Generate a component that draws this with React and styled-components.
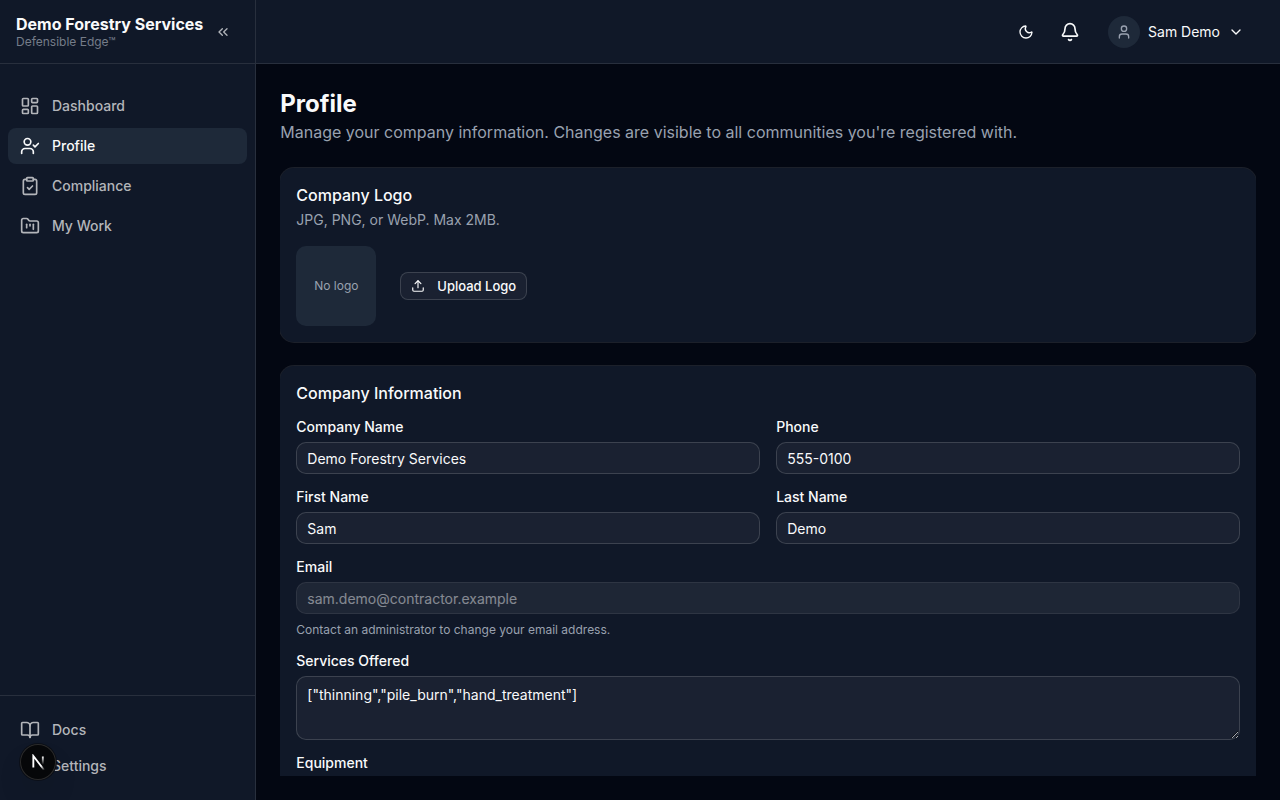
import React from "react";
import styled, { createGlobalStyle, css } from "styled-components";
import {
  LayoutDashboard,
  UserCheck,
  ClipboardCheck,
  FolderKanban,
  BookOpen,
  Settings,
  ChevronsLeft,
  ChevronDown,
  Moon,
  Bell,
  User,
  Upload,
} from "lucide-react";

const GlobalStyle = createGlobalStyle`
  *, *::before, *::after { box-sizing: border-box; }
  body {
    margin: 0;
    background: #030712;
    color: #f9fafb;
    font-family: Inter, "Liberation Sans", sans-serif;
    font-size: 14px;
    line-height: 20px;
    -webkit-font-smoothing: antialiased;
  }
  button, input, textarea { font: inherit; color: inherit; }
`;

const line = "rgb(255 255 255 / 10%)";
const muted = "#99a1af";
const surface = "#101828";
const raised = "#1e2939";

const Shell = styled.div`
  display: flex;
  height: 100vh;
  overflow: hidden;
`;

const Sidebar = styled.aside`
  display: flex;
  flex-direction: column;
  flex: 0 0 256px;
  background: ${surface};
  border-right: 1px solid ${line};
`;

const Brand = styled.div`
  display: flex;
  align-items: center;
  gap: 4px;
  height: 64px;
  padding: 0 16px;
  border-bottom: 1px solid ${line};
`;

const BrandName = styled.div`
  font-size: 16px;
  font-weight: 700;
  line-height: 20px;
  white-space: nowrap;
`;

const BrandTag = styled.div`
  font-size: 12px;
  line-height: 16px;
  color: #757c89;
`;

const IconButton = styled.button`
  display: flex;
  align-items: center;
  justify-content: center;
  width: ${(p) => (p.$small ? 32 : 36)}px;
  height: ${(p) => (p.$small ? 32 : 36)}px;
  flex: none;
  padding: 0;
  border: 0;
  border-radius: 8px;
  background: none;
  color: ${(p) => (p.$dim ? "#b0b3b9" : "#f9fafb")};
  cursor: pointer;
`;

const Nav = styled.nav`
  display: flex;
  flex-direction: column;
  ${(p) =>
    p.$footer
      ? css`
          padding: 16px 8px;
          border-top: 1px solid ${line};
        `
      : css`
          flex: 1;
          gap: 4px;
          padding: 24px 8px;
        `}
`;

const NavItem = styled.a`
  display: flex;
  align-items: center;
  gap: 12px;
  height: 36px;
  padding: 0 12px;
  border-radius: 8px;
  font-weight: 500;
  text-decoration: none;
  color: ${(p) => (p.$active ? "#f9fafb" : "#b3b5ba")};
  background: ${(p) => (p.$active ? raised : "transparent")};
`;

const Column = styled.div`
  display: flex;
  flex-direction: column;
  flex: 1;
  min-width: 0;
`;

const TopBar = styled.header`
  display: flex;
  align-items: center;
  justify-content: flex-end;
  gap: 8px;
  height: 64px;
  flex: none;
  padding: 0 24px;
  background: ${surface};
  border-bottom: 1px solid ${line};
`;

const UserButton = styled.button`
  display: flex;
  align-items: center;
  gap: 8px;
  height: 40px;
  padding: 0 12px;
  border: 0;
  border-radius: 8px;
  background: none;
  cursor: pointer;
`;

const Avatar = styled.span`
  display: flex;
  align-items: center;
  justify-content: center;
  width: 32px;
  height: 32px;
  border-radius: 50%;
  background: ${raised};
  color: ${muted};
`;

const Main = styled.main`
  display: flex;
  flex: 1;
  min-height: 0;
  padding: 24px;
`;

const Scroller = styled.div`
  display: flex;
  flex-direction: column;
  gap: 24px;
  flex: 1;
  min-width: 0;
  overflow-y: auto;
  scrollbar-width: none;
`;

const PageTitle = styled.h1`
  margin: 0;
  font-size: 24px;
  line-height: 32px;
  font-weight: 700;
`;

const PageLead = styled.p`
  margin: 0;
  font-size: 16px;
  line-height: 24px;
  color: ${muted};
`;

const Card = styled.section`
  display: flex;
  flex-direction: column;
  gap: 16px;
  flex: none;
  padding: 16px;
  border-radius: 14px;
  background: ${surface};
  box-shadow: 0 0 0 1px ${line};
`;

const CardHeader = styled.div`
  display: flex;
  flex-direction: column;
  gap: 4px;
`;

const CardTitle = styled.h2`
  margin: 0;
  font-size: 16px;
  line-height: 22px;
  font-weight: 500;
`;

const CardText = styled.p`
  margin: 0;
  color: ${muted};
`;

const LogoRow = styled.div`
  display: flex;
  align-items: center;
  gap: 24px;
`;

const LogoBox = styled.div`
  display: flex;
  align-items: center;
  justify-content: center;
  width: 80px;
  height: 80px;
  border-radius: 10px;
  background: ${raised};
  color: ${muted};
  font-size: 12px;
`;

const UploadButton = styled.button`
  display: flex;
  align-items: center;
  gap: 12px;
  height: 28px;
  padding: 0 10px;
  border: 1px solid rgb(255 255 255 / 15%);
  border-radius: 8px;
  background: rgb(255 255 255 / 4.5%);
  font-size: 13px;
  font-weight: 500;
  cursor: pointer;
`;

const FieldGrid = styled.div`
  display: grid;
  grid-template-columns: 1fr 1fr;
  gap: 16px;
`;

const Field = styled.div`
  display: flex;
  flex-direction: column;
  gap: 8px;
  min-width: 0;
`;

const Label = styled.label`
  font-weight: 500;
  line-height: 14px;
`;

const control = css`
  width: 100%;
  border: 1px solid rgb(255 255 255 / 15%);
  border-radius: 10px;
  background: rgb(255 255 255 / 4.5%);
  outline: none;
`;

const Input = styled.input`
  ${control}
  height: 32px;
  padding: 4px 10px;

  &:disabled {
    background: rgb(255 255 255 / 12%);
    opacity: 0.5;
  }
`;

const TextArea = styled.textarea`
  ${control}
  display: block;
  height: 64px;
  padding: 8px 10px;
  resize: vertical;
`;

const Hint = styled.p`
  margin: 0;
  font-size: 12px;
  line-height: 16px;
  color: ${muted};
`;

const DevBadge = styled.button`
  position: fixed;
  left: 20px;
  bottom: 20px;
  display: flex;
  align-items: center;
  justify-content: center;
  width: 36px;
  height: 36px;
  padding: 0;
  border: 0;
  border-radius: 50%;
  background: #060709;
  box-shadow: inset 0 0 0 1px #2b2b2c, 0 0 0 1px #0b0f18,
    0 16px 32px -8px rgb(0 0 0 / 24%);
  cursor: pointer;
`;

const mainLinks = [
  { label: "Dashboard", Icon: LayoutDashboard },
  { label: "Profile", Icon: UserCheck, active: true },
  { label: "Compliance", Icon: ClipboardCheck },
  { label: "My Work", Icon: FolderKanban },
];

const footerLinks = [
  { label: "Docs", Icon: BookOpen },
  { label: "Settings", Icon: Settings },
];

function NavLinks({ links }) {
  return links.map(({ label, Icon, active }) => (
    <NavItem
      key={label}
      href="#"
      $active={active}
      aria-current={active ? "page" : undefined}
    >
      <Icon size={20} />
      {label}
    </NavItem>
  ));
}

function TextField({ id, label, hint, ...rest }) {
  return (
    <Field>
      <Label htmlFor={id}>{label}</Label>
      <Input id={id} {...rest} />
      {hint && <Hint>{hint}</Hint>}
    </Field>
  );
}

function AreaField({ id, label, value }) {
  return (
    <Field>
      <Label htmlFor={id}>{label}</Label>
      <TextArea id={id} defaultValue={value} />
    </Field>
  );
}

function NextMark() {
  return (
    <svg width="16" height="16" viewBox="-1 -1 16 16" fill="none" aria-hidden="true">
      <defs>
        <linearGradient id="diag" x1="9.96" y1="11.12" x2="15.48" y2="17.97" gradientUnits="userSpaceOnUse">
          <stop stopColor="#fff" />
          <stop offset="0.6" stopColor="#fff" stopOpacity="0" />
        </linearGradient>
        <linearGradient id="stem" x1="11.82" y1="1.4" x2="11.79" y2="9.63" gradientUnits="userSpaceOnUse">
          <stop stopColor="#fff" />
          <stop offset="1" stopColor="#fff" stopOpacity="0" />
        </linearGradient>
      </defs>
      <path d="M13.3 15.2 L2.34 1 V12.6" stroke="url(#diag)" strokeWidth="1.86" />
      <path d="M11.825 1.5 V13.1" stroke="url(#stem)" strokeWidth="1.86" />
    </svg>
  );
}

export default function App() {
  return (
    <>
      <GlobalStyle />
      <Shell>
        <Sidebar>
          <Brand>
            <div>
              <BrandName>Demo Forestry Services</BrandName>
              <BrandTag>Defensible Edge™</BrandTag>
            </div>
            <IconButton $small $dim aria-label="Collapse sidebar">
              <ChevronsLeft size={16} />
            </IconButton>
          </Brand>
          <Nav>
            <NavLinks links={mainLinks} />
          </Nav>
          <Nav $footer>
            <NavLinks links={footerLinks} />
          </Nav>
        </Sidebar>
        <Column>
          <TopBar>
            <IconButton aria-label="Toggle theme">
              <Moon size={16} />
            </IconButton>
            <IconButton aria-label="Notifications">
              <Bell size={20} />
            </IconButton>
            <UserButton>
              <Avatar>
                <User size={16} />
              </Avatar>
              Sam Demo
              <ChevronDown size={16} />
            </UserButton>
          </TopBar>
          <Main>
            <Scroller>
              <div>
                <PageTitle>Profile</PageTitle>
                <PageLead>
                  Manage your company information. Changes are visible to all
                  communities you're registered with.
                </PageLead>
              </div>
              <Card>
                <CardHeader>
                  <CardTitle>Company Logo</CardTitle>
                  <CardText>JPG, PNG, or WebP. Max 2MB.</CardText>
                </CardHeader>
                <LogoRow>
                  <LogoBox>No logo</LogoBox>
                  <UploadButton>
                    <Upload size={14} />
                    Upload Logo
                  </UploadButton>
                </LogoRow>
              </Card>
              <Card>
                <CardTitle>Company Information</CardTitle>
                <FieldGrid>
                  <TextField id="company" label="Company Name" defaultValue="Demo Forestry Services" />
                  <TextField id="phone" label="Phone" defaultValue="555-0100" />
                  <TextField id="first" label="First Name" defaultValue="Sam" />
                  <TextField id="last" label="Last Name" defaultValue="Demo" />
                </FieldGrid>
                <TextField
                  id="email"
                  label="Email"
                  defaultValue="sam.demo@contractor.example"
                  hint="Contact an administrator to change your email address."
                  disabled
                />
                <AreaField
                  id="services"
                  label="Services Offered"
                  value={'["thinning","pile_burn","hand_treatment"]'}
                />
                <AreaField id="equipment" label="Equipment" value="" />
              </Card>
            </Scroller>
          </Main>
        </Column>
      </Shell>
      <DevBadge aria-label="Open developer tools">
        <NextMark />
      </DevBadge>
    </>
  );
}
